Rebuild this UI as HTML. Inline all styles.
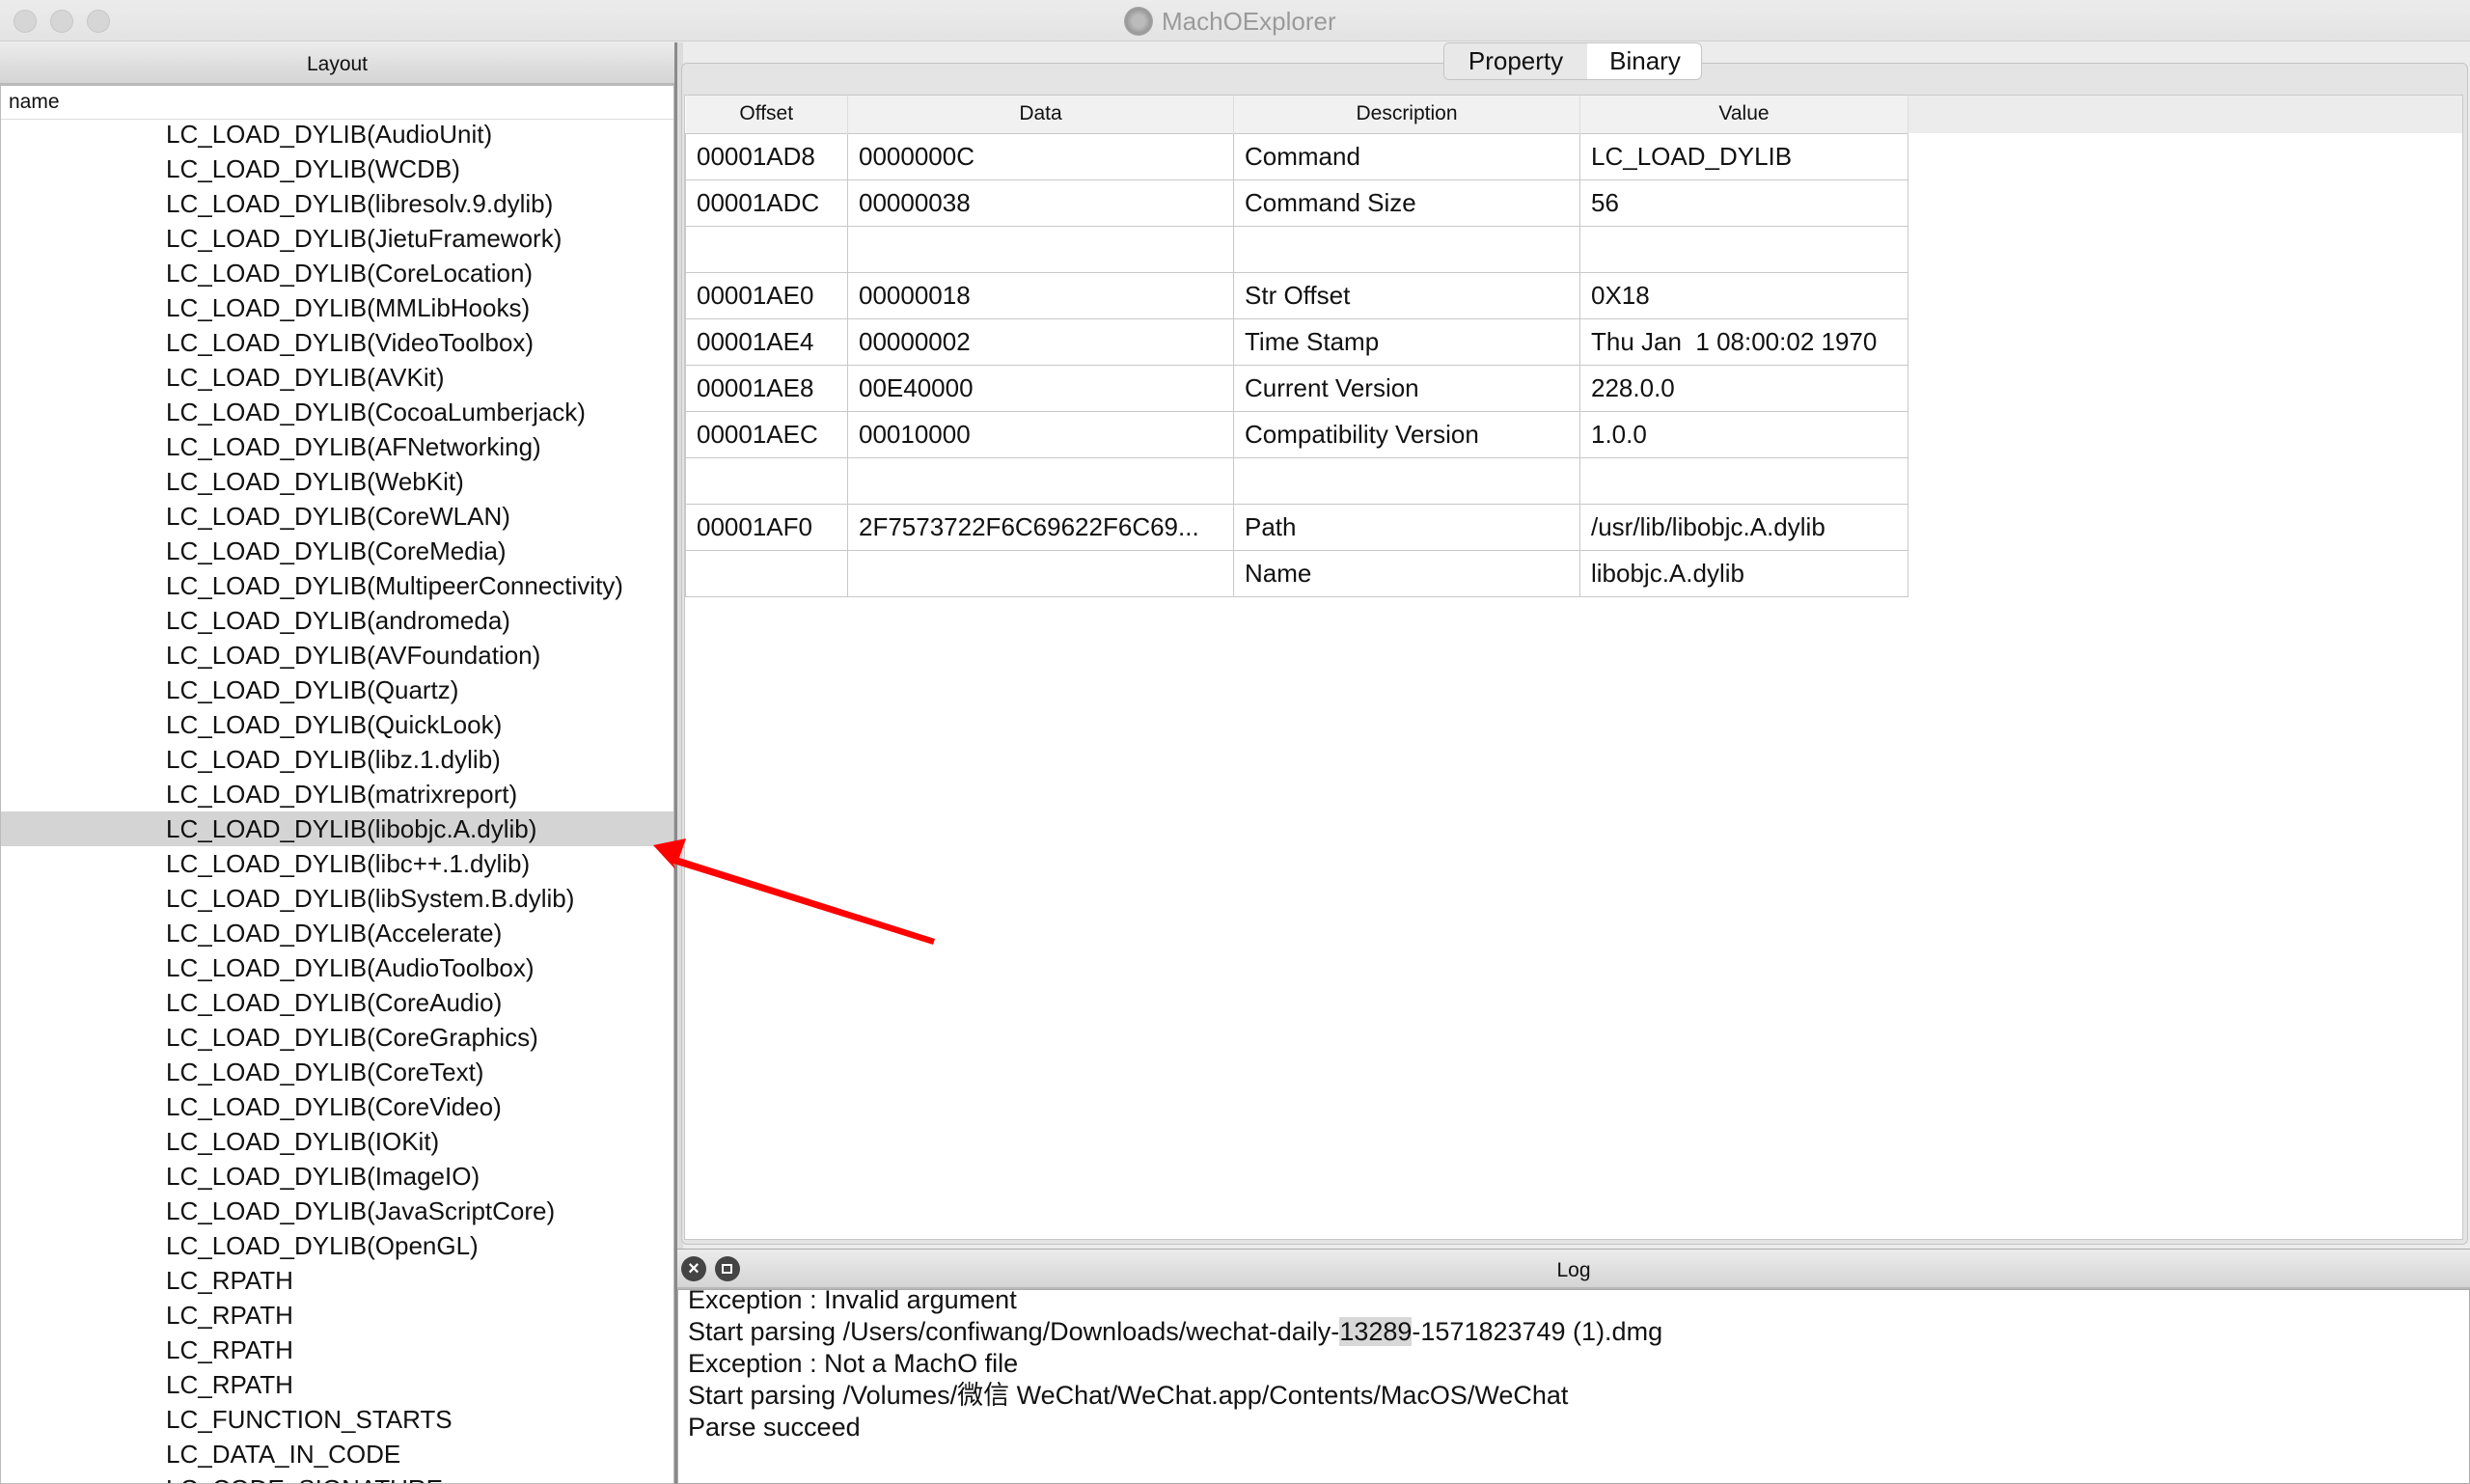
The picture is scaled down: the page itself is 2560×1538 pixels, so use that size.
<!DOCTYPE html>
<html><head><meta charset="utf-8"><style>
*{margin:0;padding:0;box-sizing:border-box}
html{width:2560px;height:1538px;overflow:hidden}
body{width:2560px;height:1538px;overflow:hidden;background:#ececec;font-family:"Liberation Sans","Noto Sans CJK SC",sans-serif;color:#111;position:relative}
.abs{position:absolute}
.title{left:0;top:0;width:2560px;height:43px;background:linear-gradient(#ececec,#e3e3e3);border-bottom:1px solid #cfcfcf}
.dot{top:10px;width:24px;height:24px;border-radius:50%;background:#d6d6d6;border:1px solid #c8c8c8}
.hdr{background:linear-gradient(#ececec,#d4d4d4);border-bottom:2px solid #b8b8b8;text-align:center;font-size:21px}
.list{left:0;top:88px;width:699px;height:1450px;background:#fff;border:1px solid #bbb;overflow:hidden}
.row{position:absolute;left:0;width:697px;height:36px;font-size:26px;line-height:36px;padding-left:171px;white-space:nowrap}
table{border-collapse:collapse;font-size:26px}
td{border:1px solid #c8c8c8;height:48px;padding-left:11px;white-space:nowrap}
th{font-weight:normal;font-size:21px;height:39px;border-right:1px solid #ddd}
.log div{height:33px;line-height:33px;font-size:27px;white-space:nowrap}
</style></head><body>
<div class="abs title"></div>
<div class="abs dot" style="left:14px"></div>
<div class="abs dot" style="left:52px"></div>
<div class="abs dot" style="left:90px"></div>
<div class="abs" style="left:1165px;top:7px;width:30px;height:30px;border-radius:50%;background:radial-gradient(#bbb 30%,#999 60%,#ccc)"></div>
<div class="abs" style="left:1204px;top:7px;font-size:26px;color:#9a9a9a">MachOExplorer</div>

<div class="abs hdr" style="left:0;top:44px;width:699px;height:44px;line-height:46px">Layout</div>
<div class="abs list">
<div class="abs" style="left:0;top:0;width:697px;height:35px;border-bottom:1px solid #ddd;font-size:21px;line-height:34px;padding-left:8px">name</div>
<div class="abs" style="left:0;top:32px;width:697px">
<div class="row" style="top:0">LC_LOAD_DYLIB(AudioUnit)</div>
<div class="row" style="top:36px">LC_LOAD_DYLIB(WCDB)</div>
<div class="row" style="top:72px">LC_LOAD_DYLIB(libresolv.9.dylib)</div>
<div class="row" style="top:108px">LC_LOAD_DYLIB(JietuFramework)</div>
<div class="row" style="top:144px">LC_LOAD_DYLIB(CoreLocation)</div>
<div class="row" style="top:180px">LC_LOAD_DYLIB(MMLibHooks)</div>
<div class="row" style="top:216px">LC_LOAD_DYLIB(VideoToolbox)</div>
<div class="row" style="top:252px">LC_LOAD_DYLIB(AVKit)</div>
<div class="row" style="top:288px">LC_LOAD_DYLIB(CocoaLumberjack)</div>
<div class="row" style="top:324px">LC_LOAD_DYLIB(AFNetworking)</div>
<div class="row" style="top:360px">LC_LOAD_DYLIB(WebKit)</div>
<div class="row" style="top:396px">LC_LOAD_DYLIB(CoreWLAN)</div>
<div class="row" style="top:432px">LC_LOAD_DYLIB(CoreMedia)</div>
<div class="row" style="top:468px">LC_LOAD_DYLIB(MultipeerConnectivity)</div>
<div class="row" style="top:504px">LC_LOAD_DYLIB(andromeda)</div>
<div class="row" style="top:540px">LC_LOAD_DYLIB(AVFoundation)</div>
<div class="row" style="top:576px">LC_LOAD_DYLIB(Quartz)</div>
<div class="row" style="top:612px">LC_LOAD_DYLIB(QuickLook)</div>
<div class="row" style="top:648px">LC_LOAD_DYLIB(libz.1.dylib)</div>
<div class="row" style="top:684px">LC_LOAD_DYLIB(matrixreport)</div>
<div class="row" style="top:720px;background:#d4d4d4">LC_LOAD_DYLIB(libobjc.A.dylib)</div>
<div class="row" style="top:756px">LC_LOAD_DYLIB(libc++.1.dylib)</div>
<div class="row" style="top:792px">LC_LOAD_DYLIB(libSystem.B.dylib)</div>
<div class="row" style="top:828px">LC_LOAD_DYLIB(Accelerate)</div>
<div class="row" style="top:864px">LC_LOAD_DYLIB(AudioToolbox)</div>
<div class="row" style="top:900px">LC_LOAD_DYLIB(CoreAudio)</div>
<div class="row" style="top:936px">LC_LOAD_DYLIB(CoreGraphics)</div>
<div class="row" style="top:972px">LC_LOAD_DYLIB(CoreText)</div>
<div class="row" style="top:1008px">LC_LOAD_DYLIB(CoreVideo)</div>
<div class="row" style="top:1044px">LC_LOAD_DYLIB(IOKit)</div>
<div class="row" style="top:1080px">LC_LOAD_DYLIB(ImageIO)</div>
<div class="row" style="top:1116px">LC_LOAD_DYLIB(JavaScriptCore)</div>
<div class="row" style="top:1152px">LC_LOAD_DYLIB(OpenGL)</div>
<div class="row" style="top:1188px">LC_RPATH</div>
<div class="row" style="top:1224px">LC_RPATH</div>
<div class="row" style="top:1260px">LC_RPATH</div>
<div class="row" style="top:1296px">LC_RPATH</div>
<div class="row" style="top:1332px">LC_FUNCTION_STARTS</div>
<div class="row" style="top:1368px">LC_DATA_IN_CODE</div>
<div class="row" style="top:1404px">LC_CODE_SIGNATURE</div>
</div></div>
<div class="abs" style="left:699px;top:44px;width:3px;height:1494px;background:#8a8a8a"></div>
<div class="abs" style="left:702px;top:44px;width:6px;height:1494px;background:#dcdcdc"></div>

<div class="abs" style="left:706px;top:65px;width:1852px;height:1225px;border:1px solid #c4c4c4;border-radius:6px;background:#e4e4e4"></div>
<div class="abs" style="left:1496px;top:44px;width:268px;height:39px;border:1px solid #c4c4c4;border-radius:6px;background:#fff;overflow:hidden;font-size:26px;line-height:37px">
<div class="abs" style="left:0;top:0;width:148px;height:39px;background:#e8e8e8;text-align:center">Property</div>
<div class="abs" style="left:148px;top:0;width:120px;text-align:center">Binary</div>
</div>
<div class="abs" style="left:709px;top:98px;width:1844px;height:1187px;background:#fff;border:1px solid #c8c8c8;overflow:hidden">
<table style="position:absolute;left:0;top:0">
<tr style="background:#f1f1f1"><th style="width:168px">Offset</th><th style="width:400px">Data</th><th style="width:359px">Description</th><th style="width:340px">Value</th></tr>
<tr><td>00001AD8</td><td>0000000C</td><td>Command</td><td>LC_LOAD_DYLIB</td></tr>
<tr><td>00001ADC</td><td>00000038</td><td>Command Size</td><td>56</td></tr>
<tr><td></td><td></td><td></td><td></td></tr>
<tr><td>00001AE0</td><td>00000018</td><td>Str Offset</td><td>0X18</td></tr>
<tr><td>00001AE4</td><td>00000002</td><td>Time Stamp</td><td>Thu Jan&nbsp; 1 08:00:02 1970</td></tr>
<tr><td>00001AE8</td><td>00E40000</td><td>Current Version</td><td>228.0.0</td></tr>
<tr><td>00001AEC</td><td>00010000</td><td>Compatibility Version</td><td>1.0.0</td></tr>
<tr><td></td><td></td><td></td><td></td></tr>
<tr><td>00001AF0</td><td>2F7573722F6C69622F6C69...</td><td>Path</td><td>/usr/lib/libobjc.A.dylib</td></tr>
<tr><td></td><td></td><td>Name</td><td>libobjc.A.dylib</td></tr>
</table>
<div class="abs" style="left:1268px;top:0;width:574px;height:39px;background:#ececec"></div>
</div>

<div class="abs hdr" style="left:702px;top:1294px;width:1858px;height:42px;line-height:44px;border-top:1px solid #aaa">Log</div>
<div class="abs" style="left:706px;top:1302px;width:26px;height:26px;border-radius:50%;background:#444;color:#fff;font-size:20px;line-height:26px;text-align:center;font-weight:bold">×</div>
<div class="abs" style="left:741px;top:1302px;width:26px;height:26px;border-radius:50%;background:#444"><div class="abs" style="left:7px;top:8px;width:11px;height:10px;border:2px solid #fff"></div></div>
<div class="abs log" style="left:702px;top:1336px;width:1858px;height:202px;background:#fff;border:1px solid #aaa;padding-left:10px;overflow:hidden">
<div style="margin-top:-6px">Exception : Invalid argument</div>
<div>Start parsing /Users/confiwang/Downloads/wechat-daily-<span style="background:#d8d8d8">13289</span>-1571823749 (1).dmg</div>
<div>Exception : Not a MachO file</div>
<div>Start parsing /Volumes/微信 WeChat/WeChat.app/Contents/MacOS/WeChat</div>
<div>Parse succeed</div>
</div>

<svg class="abs" style="left:0;top:0" width="2560" height="1538"><polygon points="677,876 711,869 704,889 969,973 967,979 698,895 700,901" fill="#f00"/></svg>
</body></html>
